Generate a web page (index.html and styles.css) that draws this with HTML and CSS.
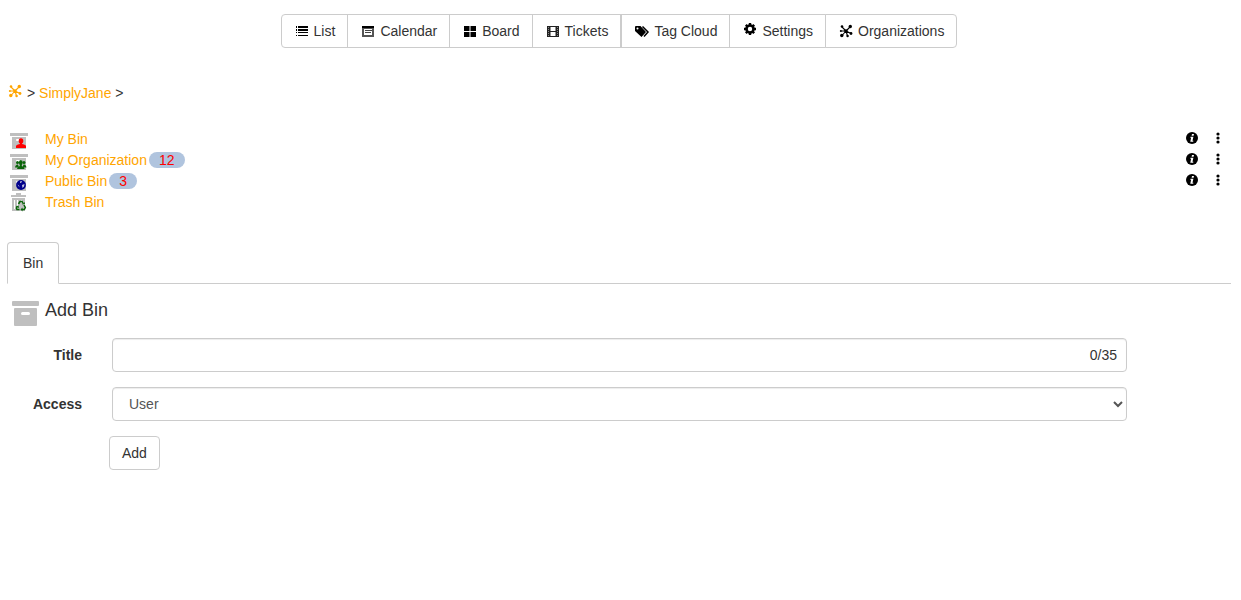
FILE: index.html
```
<!DOCTYPE html>
<html lang="en">
<head>
<meta charset="utf-8">
<title>Bins</title>
<meta name="viewport" content="width=device-width, initial-scale=1">
<link rel="stylesheet" href="styles.css">
</head>
<body>
<svg class="sprite" aria-hidden="true">
  <symbol id="hub" viewBox="0 0 16 16">
    <path d="M8 8 4 4M8 8l4-4M8 8H3M8 8l5 2.500M8 8l-4 4.500M8 8l1.500 5" stroke="currentColor" stroke-width="1.100" fill="none"/>
    <circle cx="8" cy="8" r="1.700"/><circle cx="4" cy="3.500" r="1.300"/><circle cx="12.300" cy="3.500" r="1.700"/><circle cx="2.800" cy="8" r="1"/><circle cx="13" cy="10.500" r="1.400"/><circle cx="3.800" cy="12.500" r="1.700"/><circle cx="9.600" cy="13" r="1.200"/>
  </symbol>
  <symbol id="info" viewBox="0 0 12 12">
    <circle cx="6" cy="6" r="6"/>
    <path d="M6 2h2L7.600 3.700h-2zM4.500 4.700h2.900L6.500 8.700h.9l-.2 1H4.300L5.100 5.700h-.8z" fill="#fff"/>
  </symbol>
  <symbol id="more" viewBox="0 0 4 12"><circle cx="2" cy="2" r="1.600"/><circle cx="2" cy="6" r="1.600"/><circle cx="2" cy="10" r="1.600"/></symbol>
  <symbol id="box" viewBox="0 0 18 17"><path d="M0 1h18v3H0zM2 5h14v12H2z" fill="#bfbfbf"/><rect x="6" y="7" width="6" height="2" rx="1" fill="#fff"/></symbol>
</svg>

<nav class="toolbar" aria-label="Views">
  <a class="btn" href="#list"><svg class="icon" viewBox="0 0 16 16"><path d="M2 3h1v2H2zM2 6h1v2H2zM2 9h1v1H2zM2 12h1v1H2zM4 3h10v2H4zM4 6h10v2H4zM4 9h10v1H4zM4 12h10v1H4z"/></svg>List</a>
  <a class="btn" href="#calendar"><svg class="icon" viewBox="0 0 16 16"><path d="M2 3h12v11H2z" fill="#555"/><path d="M2 3h12v2H2z"/><path d="M4 6h8v6H4z" fill="#fff"/><path d="M5 7h7v1H5zM5 9h6v1H5z" fill="#444"/></svg>Calendar</a>
  <a class="btn" href="#board"><svg class="icon" viewBox="0 0 16 16"><path d="M2 3h5.500v5H2zM8.500 3H14v5H8.500zM2 9h5.500v5H2zM8.500 9H14v5H8.500z"/></svg>Board</a>
  <a class="btn" href="#tickets"><svg class="icon" viewBox="0 0 16 16"><path fill-rule="evenodd" d="M2 3h12v11H2zM5.500 4v4h5V4zM5.500 9v4h5V9z" fill="#222"/><path d="M3 4h1v1H3zM3 6h1v1H3zM3 8h1v1H3zM3 10h1v1H3zM3 12h1v1H3zM12 4h1v1h-1zM12 6h1v1h-1zM12 8h1v1h-1zM12 10h1v1h-1zM12 12h1v1h-1z" fill="#888"/></svg>Tickets</a>
  <a class="btn btn-split" href="#tags"><svg class="icon" viewBox="0 0 16 16"><path fill-rule="evenodd" d="M1 4q0-1 1-1h4.500l5.500 6-4.500 5L1 8zM3.500 4.500a1 1 0 1 0 0 2 1 1 0 0 0 0-2z"/><path d="M8.500 3.500 14 9l-4 4.500" stroke="currentColor" stroke-width="1.500" fill="none"/></svg>Tag Cloud</a>
  <a class="btn" href="#settings"><svg class="icon icon-gear" viewBox="0 0 16 16"><circle cx="8" cy="8" r="3.500" fill="none" stroke="currentColor" stroke-width="2.600"/><path d="M8 2v2.500M8 11.500V14M2 8h2.500M11.500 8H14M3.800 3.800l1.700 1.700M10.500 10.500l1.700 1.700M12.200 3.800l-1.700 1.700M5.500 10.500l-1.700 1.700" stroke="currentColor" stroke-width="2.400"/></svg>Settings</a>
  <a class="btn" href="#organizations"><svg class="icon"><use href="#hub"/></svg>Organizations</a>
</nav>

<nav class="crumbs" aria-label="Breadcrumb">
  <a href="#root" aria-label="Organizations"><svg class="icon"><use href="#hub"/></svg></a>
  <span>&gt; <a href="#simplyjane">SimplyJane</a> &gt;</span>
</nav>

<ul class="bins">
  <li class="bin">
    <svg class="bin-icon" viewBox="0 0 18 18"><use href="#box" width="18" height="17"/><g fill="red"><ellipse cx="11" cy="9" rx="2.300" ry="2.800"/><path d="M6 16v-2q0-1 2-1.500l2-.5V10h2v2l2 .5q2 .5 2 1.500v2z"/></g></svg>
    <a href="#my-bin">My Bin</a>
    <span class="actions"><button type="button" aria-label="Info"><svg class="info"><use href="#info"/></svg></button><button type="button" aria-label="More"><svg class="more"><use href="#more"/></svg></button></span>
  </li>
  <li class="bin">
    <svg class="bin-icon" viewBox="0 0 18 18"><use href="#box" width="18" height="17"/><g fill="#0a640a"><circle cx="7.500" cy="9.500" r="1.500"/><circle cx="14" cy="9.500" r="1.500"/><ellipse cx="10.800" cy="9.500" rx="1.900" ry="2.600"/><path d="M5 14.500q0-2 2-3h1l1 3zM16.500 14.500q0-2-2-3h-1l-1 3z"/><path d="M7 16q0-2 2.800-3v-2h2v2q2.800 1 2.800 3z"/></g></svg>
    <a href="#my-organization">My Organization</a><span class="badge">12</span>
    <span class="actions"><button type="button" aria-label="Info"><svg class="info"><use href="#info"/></svg></button><button type="button" aria-label="More"><svg class="more"><use href="#more"/></svg></button></span>
  </li>
  <li class="bin">
    <svg class="bin-icon" viewBox="0 0 18 18"><use href="#box" width="18" height="17"/><circle cx="11" cy="11" r="4.900" fill="#00008b"/><path d="m10 7.500 2-.5-.5 1.500-1.500.5zM12 11l2.500-1-.5 2.500-1.500 1.500zM7.500 10.500l1.500 1 .5 2z" fill="#c5c5df"/></svg>
    <a href="#public-bin">Public Bin</a><span class="badge">3</span>
    <span class="actions"><button type="button" aria-label="Info"><svg class="info"><use href="#info"/></svg></button><button type="button" aria-label="More"><svg class="more"><use href="#more"/></svg></button></span>
  </li>
  <li class="bin">
    <svg class="bin-icon bin-icon-trash" viewBox="0 0 18 20"><path d="M6 0h5v2h5v2H1V2h5zM2 5h13v13H2z" fill="#bfbfbf"/><path d="M4 7h1v9H4zM7 7h1v9H7zM11 7h1v3h-1z" fill="#fff"/><path d="m8.500 11 1.500-2.500h2L13 10.500M14 12l1.300 2.500-1 2H12M9.500 16.500H7L6.500 15l1-2" fill="none" stroke="#0a640a" stroke-width="1.600"/><path d="m12 11.500 3-.5-.5-2zM12.500 14.500v4l-2-2zM5.800 13.500l2.700-1 .5 2.500z" fill="#0a640a"/></svg>
    <a href="#trash-bin">Trash Bin</a>
  </li>
</ul>

<div class="tabs" role="tablist">
  <button class="tab" type="button" role="tab" aria-selected="true">Bin</button>
</div>

<form class="add-bin">
  <h1 class="heading"><svg class="heading-icon" viewBox="0 0 28 26"><rect x="1" y="1" width="27" height="5" rx="1"/><rect x="3" y="8" width="23" height="18" rx="1"/><rect x="10" y="12" width="9" height="3" rx="1.500" fill="#fff"/></svg>Add Bin</h1>
  <div class="field">
    <label for="title">Title</label>
    <div class="control counted"><input id="title" type="text" maxlength="35"><span class="counter">0/35</span></div>
  </div>
  <div class="field">
    <label for="access">Access</label>
    <select class="control" id="access"><option>User</option></select>
  </div>
  <button class="btn add" type="submit">Add</button>
</form>
</body>
</html>
```
FILE: styles.css
```
* { box-sizing: border-box; }

body {
  margin: 0;
  padding: 14px 10px 14px 7px;
  background: #fff;
  color: #333;
  font: 14px/20px "Liberation Sans", Arial, sans-serif;
}

a { color: orange; text-decoration: none; }
button, input, select { font: inherit; color: inherit; }
svg { display: block; fill: currentColor; flex: none; }
.sprite { position: absolute; width: 0; height: 0; }
.icon { width: 16px; height: 16px; }

.btn {
  display: inline-flex;
  align-items: center;
  gap: 4px;
  height: 34px;
  padding: 0 12px;
  border: 1px solid #ccc;
  border-radius: 4px;
  background: #fff;
  color: #333;
}

.toolbar { display: flex; flex-wrap: wrap; justify-content: center; }
.toolbar .btn { border-radius: 0; }
.toolbar .btn + .btn { margin-left: -1px; }
.toolbar .btn + .btn-split { margin-left: 0; }
.toolbar .btn:first-child { border-radius: 4px 0 0 4px; }
.toolbar .btn:last-child { border-radius: 0 4px 4px 0; }
.toolbar .icon { color: #000; }
.icon-gear { margin-bottom: 4px; }

.crumbs { display: flex; gap: 4px; margin-top: 35px; }

.bins { margin: 25px 0 0; padding: 0; list-style: none; }
.bin { display: flex; align-items: center; height: 21px; padding-left: 3px; }
.bin-icon { width: 18px; height: 18px; margin: 4px 17px 0 0; }
.bin-icon-trash { height: 20px; margin-top: 2px; }
.badge {
  height: 16px;
  margin-left: 2px;
  padding: 0 10px;
  border-radius: 10px;
  background: lightsteelblue;
  color: red;
  line-height: 16px;
}
.actions { display: flex; align-items: center; gap: 18px; margin: 0 0 2px auto; padding-right: 11px; color: #000; }
.actions button { padding: 0; border: 0; background: none; }
.info { width: 12px; height: 12px; }
.more { width: 4px; height: 12px; }

.tabs { display: flex; margin-top: 30px; border-bottom: 1px solid #ccc; }
.tab {
  height: 42px;
  margin-bottom: -1px;
  padding: 0 15px;
  border: 1px solid #ccc;
  border-bottom-color: #fff;
  border-radius: 4px 4px 0 0;
  background: #fff;
}

.add-bin { padding-top: 16px; }
.heading { display: flex; gap: 6px; margin: 0 0 12px; padding-left: 4px; font-size: 18px; font-weight: 400; line-height: 20px; height: 26px; }
.heading-icon { width: 28px; height: 26px; color: #bfbfbf; }
.field {
  display: grid;
  grid-template-columns: 75px 1fr;
  column-gap: 30px;
  align-items: center;
  margin-bottom: 15px;
  padding-right: 8.5%;
}
.field label { font-weight: 700; text-align: right; }
.control {
  width: 100%;
  height: 34px;
  border: 1px solid #ccc;
  border-radius: 4px;
  background: #fff;
  box-shadow: inset 0 1px 1px rgba(0, 0, 0, 0.075);
}
select.control { padding: 0 1px 0 12px; color: #555; }
.counted { display: flex; align-items: center; padding-right: 9px; }
.counted input { flex: 1; min-width: 0; height: 30px; padding: 0 12px; border: 0; outline: 0; background: none; }
.add { margin-left: 102px; }
```
